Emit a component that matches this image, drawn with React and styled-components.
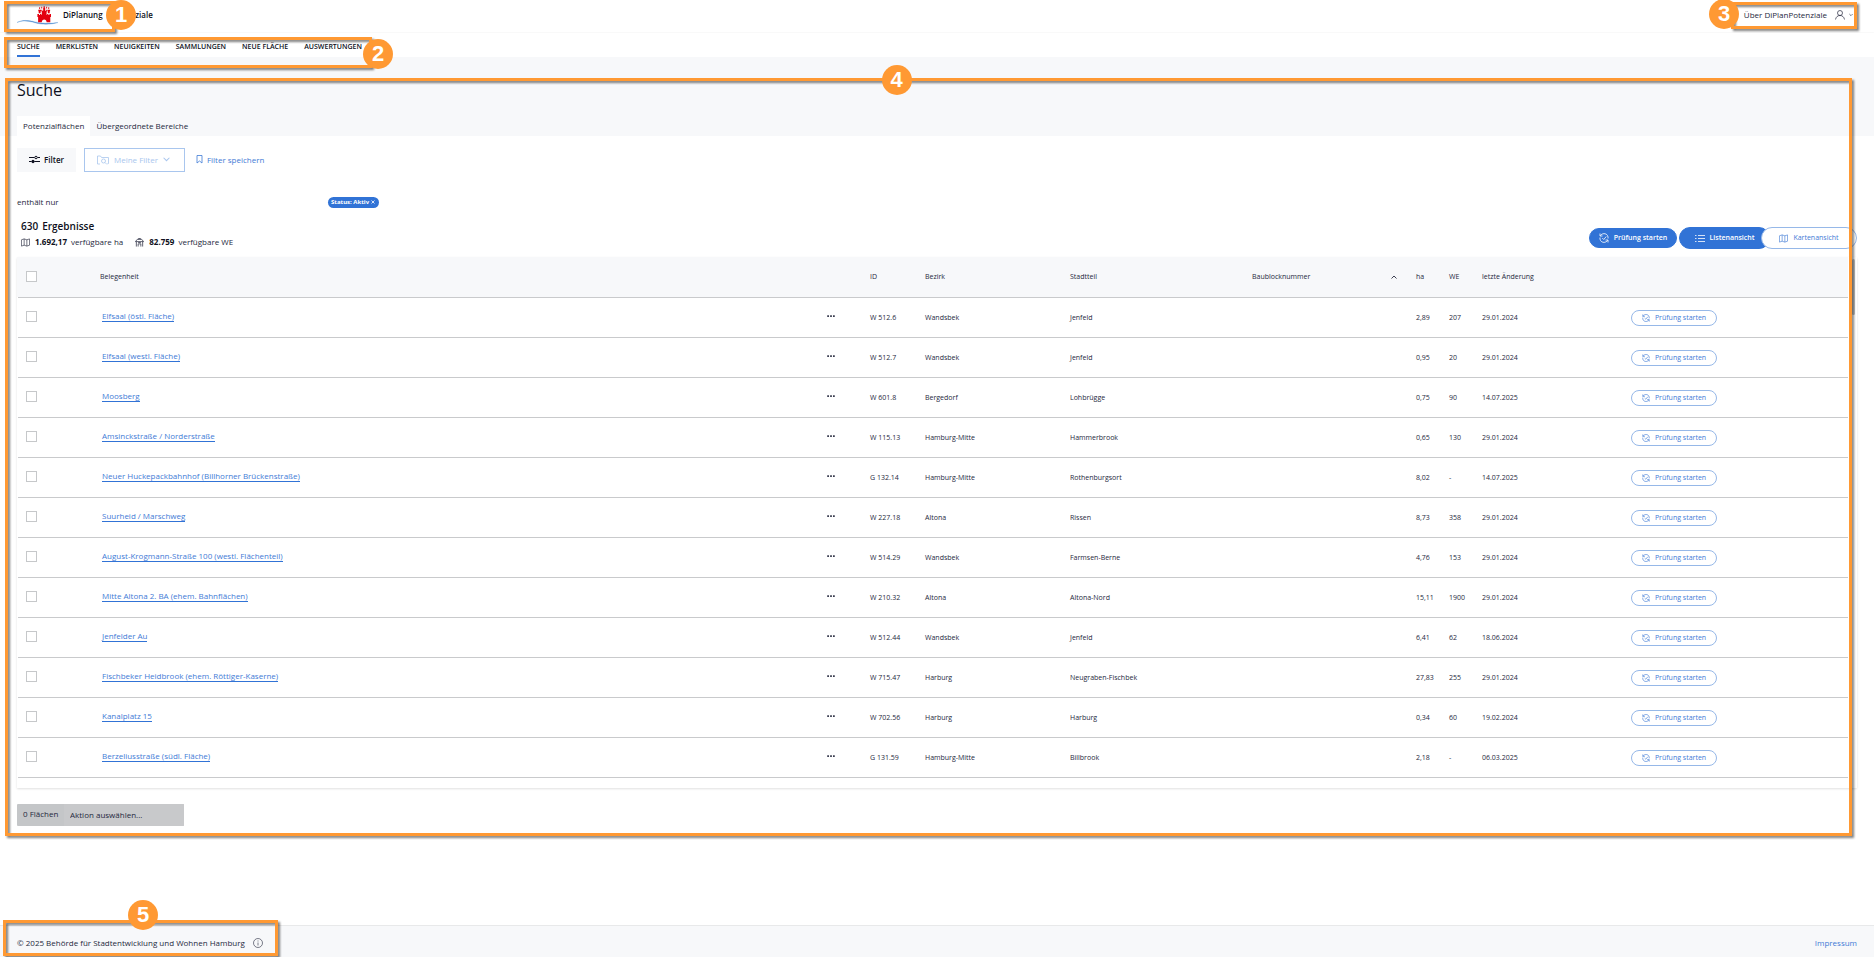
import React from "react";
import styled, { createGlobalStyle, css } from "styled-components";

const GlobalStyle = createGlobalStyle`
  * { box-sizing: border-box; }
  body { margin: 0; background: #fff; }
  body, button, select, input { font-family: "Open Sans", "Noto Sans", sans-serif; }
  button { cursor: pointer; }
`;

const ink = "#25283d";
const dark = "#0e1020";
const blue = "#3173d6";
const linkBlue = "#3f7bd6";
const paleBlue = "#a9c6ee";
const band = "#f7f8fa";
const orange = "#ff9933";

const Page = styled.div`
  min-height: 100vh;
  display: flex;
  flex-direction: column;
  color: ${ink};
  font-size: 8px;
  line-height: 12px;
`;

/* Numbered call-outs that lie over the page */
const Frame = styled.div`
  position: absolute;
  z-index: 5;
  pointer-events: none;
  border: 3px solid ${orange};
  filter: drop-shadow(2px 2px 1px rgba(0, 0, 0, 0.5));
  top: ${(p) => p.$top}px;
  left: ${(p) => p.$left};
  right: ${(p) => p.$right};
  width: ${(p) => p.$width};
  height: ${(p) => p.$height};
  bottom: ${(p) => p.$bottom};
`;

const Badge = styled.div`
  position: absolute;
  z-index: 6;
  pointer-events: none;
  width: 30px;
  height: 30px;
  border-radius: 50%;
  background: ${orange};
  color: #fff;
  font: 700 22px/29px "Liberation Sans", Arial, sans-serif;
  text-align: center;
  top: ${(p) => p.$top}px;
  left: ${(p) => p.$left};
  right: ${(p) => p.$right};
`;

const Header = styled.header`
  position: relative;
  height: 33px;
  padding: 0 17px;
  display: flex;
  align-items: flex-start;
  justify-content: space-between;
  border-bottom: 1px solid #fafafa;
`;

const Brand = styled.a`
  display: flex;
  align-items: center;
  height: 30px;
  color: ${dark};
  font-weight: 600;
  text-decoration: none;
  svg { margin-right: 5px; }
`;

const Divider = styled.span`
  width: 1px;
  height: 8px;
  margin: 0 4px 0 5px;
  background: #e5585f;
`;

const Account = styled.div`
  display: flex;
  align-items: center;
  height: 30px;
  gap: 4px;
  padding-right: 4px;
`;

const PlainLink = styled.a`
  color: ${(p) => p.$color || ink};
  text-decoration: none;
`;

const IconButton = styled.button`
  display: flex;
  align-items: center;
  gap: 4px;
  padding: 0;
  border: 0;
  background: none;
  color: ${ink};
  margin-left: ${(p) => (p.$spaced ? "4px" : "0")};
`;

const Nav = styled.nav`
  position: relative;
  height: 24px;
  padding: 0 17px;
  display: flex;
  gap: 16px;
  box-shadow: 0 1px 2px rgba(0, 0, 0, 0.06);
`;

const NavLink = styled.a`
  height: 24px;
  padding-top: 8px;
  font-size: 7px;
  font-weight: 600;
  color: ${dark};
  text-decoration: none;
  border-bottom: 2px solid ${(p) => (p.$active ? blue : "transparent")};
`;

const Main = styled.main`
  position: relative;
`;

const TitleBand = styled.div`
  background: ${band};
  height: 79px;
  padding: 22px 17px 0;
  display: flex;
  flex-direction: column;
  justify-content: space-between;
`;

const Title = styled.h1`
  margin: 0;
  font-size: 16px;
  line-height: 22px;
  font-weight: 400;
  color: ${dark};
`;

const Tabs = styled.div`
  display: flex;
`;

const Tab = styled.button`
  height: 20px;
  padding: 0 6px 2px;
  border: 0;
  font-size: 8px;
  color: ${ink};
  background: ${(p) => (p.$active ? "#fff" : "transparent")};
`;

const Body = styled.div`
  padding: 12px 17px 10px;
`;

const FilterRow = styled.div`
  display: flex;
  gap: 8px;
  align-items: center;
`;

const FilterButton = styled.button`
  height: 24px;
  display: flex;
  align-items: center;
  gap: 4px;
  font-size: 8px;
  padding: 0 11px 1px;
  border: 1px solid transparent;
  background: transparent;
  color: ${linkBlue};
  ${(p) => p.$kind === "solid" && css`background: ${band}; color: ${dark}; font-weight: 600;`}
  ${(p) => p.$kind === "outline" && css`border-color: ${paleBlue}; color: ${paleBlue}; gap: 5px; padding: 0 14px 1px 12px;`}
  ${(p) => p.$kind === "text" && css`padding: 0 2px 1px;`}
`;

const ActiveFilters = styled.div`
  margin-top: 24px;
  display: grid;
  grid-template-columns: 311px auto;
  justify-content: start;
  align-items: center;
`;

const Chip = styled.button`
  display: flex;
  align-items: center;
  gap: 2px;
  height: 11px;
  padding: 0 4px 0 3px;
  border: 0;
  border-radius: 6px;
  background: ${blue};
  color: #fff;
  font-size: 6px;
  font-weight: 700;
`;

const Summary = styled.div`
  margin-top: 11px;
  padding-left: 4px;
  display: flex;
  justify-content: space-between;
`;

const Count = styled.h2`
  margin: 0;
  font-size: 10px;
  line-height: 14px;
  font-weight: 600;
  color: ${dark};
  display: flex;
  gap: 4px;
`;

const Totals = styled.div`
  display: flex;
  gap: 12px;
  margin: 3px 0 1px;
`;

const Total = styled.span`
  display: flex;
  align-items: center;
  gap: 4px;
  strong { color: ${dark}; }
  svg { margin-right: 1px; }
`;

const ViewActions = styled.div`
  display: flex;
  align-items: center;
  height: 22px;
  margin-top: 8px;
`;

const Pill = styled.button`
  display: flex;
  align-items: center;
  justify-content: center;
  gap: 5px;
  height: ${(p) => p.$height}px;
  width: ${(p) => p.$width}px;
  padding: 0;
  font-size: 7px;
  line-height: 10px;
  border-radius: 11px;
  border: 1px solid ${(p) => (p.$filled ? blue : "#96b8e8")};
  background: ${(p) => (p.$filled ? blue : "#fff")};
  color: ${(p) => (p.$filled ? "#fff" : linkBlue)};
  font-weight: ${(p) => (p.$filled ? 600 : 400)};
`;

const Toggle = styled.div`
  display: flex;
  margin-left: 2px;
  button + button { margin-left: -9px; }
`;

const Card = styled.div`
  display: flex;
  height: 531px;
  margin-top: 8px;
  background: #fff;
  box-shadow: 0 1px 2px rgba(0, 0, 0, 0.12);
`;

const Table = styled.table`
  flex: 1;
  width: 100%;
  height: 0;
  margin-left: 1px;
  table-layout: fixed;
  border-collapse: collapse;
  font-size: 7px;
  line-height: 10px;
`;

const HeadRow = styled.tr`
  background: ${band};
  box-shadow: -1px 0 0 ${band};
`;

const cell = css`
  height: 40px;
  padding: 0 8px;
  text-align: left;
  vertical-align: middle;
  font-weight: 400;
  border-bottom: 1px solid #c9cacc;
`;

const Th = styled.th`${cell}`;
const Td = styled.td`
  ${cell}
  padding-top: ${(p) => (p.$raised ? "0" : "2px")};
  padding-bottom: ${(p) => (p.$raised ? "1px" : "0")};
`;

const SortHead = styled.div`
  display: flex;
  align-items: center;
  justify-content: space-between;
  padding-right: 3px;
`;

const Check = styled.input`
  appearance: none;
  display: block;
  width: 11px;
  height: 11px;
  margin: 0;
  border: 1px solid #c6c8ca;
  background: #fff;
`;

const AreaLink = styled.a`
  margin-left: 2px;
  font-size: 8px;
  color: ${linkBlue};
  text-decoration: none;
  border-bottom: 1px solid ${blue};
`;

const ScrollTrack = styled.div`
  width: 9px;
  padding: 2px 2px 0 4px;
`;

const ScrollThumb = styled.div`
  height: 56px;
  border-radius: 2px;
  background: #c1c1c1;
`;

const BulkBar = styled.div`
  display: flex;
  width: 167px;
  height: 22px;
  margin-top: 16px;
  background: #c4c6c8;
  border-radius: 1px;
`;

const BulkLabel = styled.label`
  width: 47px;
  padding: 4px 6px;
  white-space: nowrap;
`;

const BulkSelect = styled.select`
  appearance: none;
  flex: 1;
  border: 0;
  border-radius: 0 1px 1px 0;
  padding: 0 6px 2px;
  font-size: 8px;
  color: ${ink};
  background: #c8c9cb;
`;

const Footer = styled.footer`
  position: relative;
  margin-top: auto;
  height: 32px;
  padding: 2px 17px 0;
  display: flex;
  align-items: center;
  justify-content: space-between;
  background: ${band};
  border-top: 1px solid #e8e9ea;
`;

const Copyright = styled.span`
  display: flex;
  align-items: center;
  gap: 8px;
`;

const Icon = ({ w = 10, h = 10, box = "0 0 20 20", sw = 1.8, children }) => (
  <svg width={w} height={h} viewBox={box} fill="none" stroke="currentColor" strokeWidth={sw} aria-hidden="true">
    {children}
  </svg>
);

const Logo = () => (
  <svg width="41" height="20" viewBox="0 0 41 20" aria-hidden="true">
    <path d="M0 17.5C6 15 12 16 18 17.8C26 20 34 19.500 41 17.500C34 18.700 26 18.700 18 16.900C11 15 5 14.800 0 17.500Z" fill="#4a8ad0" stroke="#4a8ad0" strokeWidth=".3" />
    <g fill="#e3000f">
      <path d="M20.400 9H22V10H23V9H24.300V10H24.800V6.500H24.300V4.800H25.200V5.700H26.200V2.800H26.600V1.200H27.800V2.800H28.200V5.700H29.200V4.800H30.100V6.500H29.600V10H30.100V9H31.400V10H32.400V9H34V12H33.300V17.200H29.600C29.600 13.600 24.800 13.600 24.800 17.200H21.100V12H20.400Z" />
      <path d="M21.300 4.800h2.700v1.400h-.4v2h-1.900v-2h-.4zM30.400 4.800h2.700v1.400h-.4v2h-1.900v-2h-.4z" />
      <path d="M22.200 2.200h.9v1.900h-.9zM31.300 2.200h.9v1.900h-.9zM24.300 1.800h.9v1.600h-.9zM29.200 1.800h.9v1.600h-.9z" />
    </g>
  </svg>
);

const Chevron = ({ up, w = 6 }) => (
  <Icon w={w} h={w} box="0 0 12 12" sw={1.8}>
    <path d={up ? "M1 9L6 4L11 9" : "M1 3L6 8L11 3"} />
  </Icon>
);

const ReviewIcon = ({ size = 10 }) => (
  <Icon w={size} h={size} sw={1.6}>
    <path d="M2 1v5h5M2.500 5.500C6 0 14 0 17 5C18 7 18.500 9 18 11M18 19v-5h-5M17.500 14.500C14 20 6 20 3 15C2 13 1.500 11 2 9" />
    <path d="M6.500 10l3 3 5-6" />
  </Icon>
);

const MapIcon = ({ size = 9 }) => (
  <Icon w={size} h={size} sw={1.4}>
    <path d="M1 4l6-2 6 2 6-2v14l-6 2-6-2-6 2zM7 2v14M13 4v14" />
  </Icon>
);

const rows = [
  ["Elfsaal (östl. Fläche)", "W 512.6", "Wandsbek", "Jenfeld", "2,89", "207", "29.01.2024"],
  ["Elfsaal (westl. Fläche)", "W 512.7", "Wandsbek", "Jenfeld", "0,95", "20", "29.01.2024"],
  ["Moosberg", "W 601.8", "Bergedorf", "Lohbrügge", "0,75", "90", "14.07.2025"],
  ["Amsinckstraße / Norderstraße", "W 115.13", "Hamburg-Mitte", "Hammerbrook", "0,65", "130", "29.01.2024"],
  ["Neuer Huckepackbahnhof (Billhorner Brückenstraße)", "G 132.14", "Hamburg-Mitte", "Rothenburgsort", "8,02", "-", "14.07.2025"],
  ["Suurheid / Marschweg", "W 227.18", "Altona", "Rissen", "8,73", "358", "29.01.2024"],
  ["August-Krogmann-Straße 100 (westl. Flächenteil)", "W 514.29", "Wandsbek", "Farmsen-Berne", "4,76", "153", "29.01.2024"],
  ["Mitte Altona 2. BA (ehem. Bahnflächen)", "W 210.32", "Altona", "Altona-Nord", "15,11", "1900", "29.01.2024"],
  ["Jenfelder Au", "W 512.44", "Wandsbek", "Jenfeld", "6,41", "62", "18.06.2024"],
  ["Fischbeker Heidbrook (ehem. Röttiger-Kaserne)", "W 715.47", "Harburg", "Neugraben-Fischbek", "27,83", "255", "29.01.2024"],
  ["Kanalplatz 15", "W 702.56", "Harburg", "Harburg", "0,34", "60", "19.02.2024"],
  ["Berzeliusstraße (südl. Fläche)", "G 131.59", "Hamburg-Mitte", "Billbrook", "2,18", "-", "06.03.2025"],
];

const columnWidths = [74, null, 43, 55, 145, 182, 164, 33, 33, 149, 225];

const Col = styled.col`
  width: ${(p) => (p.$width ? `${p.$width}px` : "auto")};
`;

const navItems = ["SUCHE", "MERKLISTEN", "NEUIGKEITEN", "SAMMLUNGEN", "NEUE FLÄCHE", "AUSWERTUNGEN"];

const AreaRow = ({ row }) => {
  const [name, id, district, quarter, ha, we, date] = row;
  return (
    <tr>
      <Td $raised><Check type="checkbox" aria-label={`${name} auswählen`} /></Td>
      <Td $raised><AreaLink href="#flaeche">{name}</AreaLink></Td>
      <Td $raised>
        <IconButton aria-label="Weitere Aktionen">
          <svg width="8" height="4" viewBox="0 0 8 4" fill="currentColor" aria-hidden="true">
            <path d="M.3 .3h1.600v1.600H.3zM3.200 .3h1.600v1.600H3.200zM6.100 .3h1.600v1.600H6.100z" />
          </svg>
        </IconButton>
      </Td>
      <Td>{id}</Td>
      <Td>{district}</Td>
      <Td>{quarter}</Td>
      <Td />
      <Td>{ha}</Td>
      <Td>{we}</Td>
      <Td>{date}</Td>
      <Td><Pill $width={86} $height={16}><ReviewIcon size={8} />Prüfung starten</Pill></Td>
    </tr>
  );
};

export default function App() {
  return (
    <Page>
      <GlobalStyle />
      <Header>
        <Brand href="#start">
          <Logo />
          DiPlanung
          <Divider />
          Potenziale
        </Brand>
        <Account>
          <PlainLink href="#ueber">Über DiPlanPotenziale</PlainLink>
          <IconButton $spaced aria-label="Benutzerkonto">
            <Icon w={10} h={10} sw={1.4}>
              <circle cx="10" cy="6" r="5" />
              <path d="M1 19C2 14 5 11 10 11S18 14 19 19" />
            </Icon>
            <Chevron w={4} />
          </IconButton>
        </Account>
        <Frame $top={1} $left="4px" $width="111px" $height="31px" />
        <Badge $top={0} $left="106px">1</Badge>
        <Frame $top={2} $right="17px" $width="126px" $height="27px" />
        <Badge $top={-1} $right="135px">3</Badge>
      </Header>

      <Nav>
        {navItems.map((item, i) => (
          <NavLink key={item} href={`#nav-${i}`} $active={i === 0}>{item}</NavLink>
        ))}
        <Frame $top={4} $left="4px" $width="368px" $height="31px" />
        <Badge $top={6} $left="363px">2</Badge>
      </Nav>

      <Main>
        <TitleBand>
          <Title>Suche</Title>
          <Tabs>
            <Tab $active>Potenzialflächen</Tab>
            <Tab>Übergeordnete Bereiche</Tab>
          </Tabs>
        </TitleBand>

        <Body>
          <FilterRow>
            <FilterButton $kind="solid">
              <Icon w={11} h={9} box="0 0 22 18" sw={2}>
                <path d="M0 5h11M17 5h5M0 13h5M11 13h11" />
                <circle cx="14" cy="5" r="2.500" />
                <circle cx="8" cy="13" r="2.500" fill="currentColor" />
              </Icon>
              Filter
            </FilterButton>
            <FilterButton $kind="outline">
              <Icon w={12} h={10} box="0 0 24 20" sw={1.6}>
                <path d="M6 18H1V2h6l2 3h14v12h-2" />
                <circle cx="13" cy="12" r="4" />
                <path d="M16 15l4 4" />
              </Icon>
              Meine Filter
              <Chevron w={7} />
            </FilterButton>
            <FilterButton $kind="text">
              <Icon w={7} h={9} box="0 0 14 18" sw={1.6}>
                <path d="M2 1h10v15l-5-4-5 4z" />
              </Icon>
              Filter speichern
            </FilterButton>
          </FilterRow>

          <ActiveFilters>
            <span>enthält nur</span>
            <Chip>Status: Aktiv <Icon w={4} h={4} box="0 0 8 8" sw={1.6}><path d="M1 1l6 6M7 1L1 7" /></Icon></Chip>
          </ActiveFilters>

          <Summary>
            <div>
              <Count><span>630</span><span>Ergebnisse</span></Count>
              <Totals>
                <Total><MapIcon /><strong>1.692,17</strong> verfügbare ha</Total>
                <Total>
                  <Icon w={9} h={9} sw={1.6}>
                    <path d="M1 8L5 3h10l4 5M3 8v11M17 8v11M1 8h18M7 19v-6h6v6M8 3V1h4v2M7 10h6" />
                  </Icon>
                  <strong>82.759</strong> verfügbare WE
                </Total>
              </Totals>
            </div>
            <ViewActions>
              <Pill $filled $width={88} $height={20}><ReviewIcon />Prüfung starten</Pill>
              <Toggle>
                <Pill $filled $width={91} $height={22}>
                  <Icon w={10} h={9} box="0 0 20 18" sw={1.6}>
                    <path d="M6 3h14M6 9h14M6 15h14M0 3h3M0 9h3M0 15h3" />
                  </Icon>
                  Listenansicht
                </Pill>
                <Pill $width={96} $height={22}><MapIcon />Kartenansicht</Pill>
              </Toggle>
            </ViewActions>
          </Summary>

          <Card>
            <Table>
              <colgroup>
                {columnWidths.map((width, i) => <Col key={i} $width={width} />)}
              </colgroup>
              <thead>
                <HeadRow>
                  <Th><Check type="checkbox" aria-label="Alle auswählen" /></Th>
                  <Th>Belegenheit</Th>
                  <Th />
                  <Th>ID</Th>
                  <Th>Bezirk</Th>
                  <Th>Stadtteil</Th>
                  <Th><SortHead>Baublocknummer<Chevron up /></SortHead></Th>
                  <Th>ha</Th>
                  <Th>WE</Th>
                  <Th>letzte Änderung</Th>
                  <Th />
                </HeadRow>
              </thead>
              <tbody>
                {rows.map((row) => <AreaRow key={row[1]} row={row} />)}
              </tbody>
            </Table>
            <ScrollTrack><ScrollThumb /></ScrollTrack>
          </Card>

          <BulkBar>
            <BulkLabel htmlFor="bulk-action">0 Flächen</BulkLabel>
            <BulkSelect id="bulk-action">
              <option>Aktion auswählen...</option>
            </BulkSelect>
          </BulkBar>
        </Body>
        <Frame $top={21} $left="5px" $right="22px" $bottom="0" />
        <Badge $top={8} $left="calc(48% - 18px)">4</Badge>
      </Main>

      <Footer>
        <Copyright>
          © 2025 Behörde für Stadtentwicklung und Wohnen Hamburg
          <Icon w={10} h={10} sw={1.2}>
            <circle cx="10" cy="10" r="9" />
            <path d="M10 9v6M10 5v2" />
          </Icon>
        </Copyright>
        <PlainLink href="#impressum" $color={linkBlue}>Impressum</PlainLink>
        <Frame $top={-6} $left="3px" $width="275px" $height="36px" />
        <Badge $top={-26} $left="128px">5</Badge>
      </Footer>
    </Page>
  );
}
